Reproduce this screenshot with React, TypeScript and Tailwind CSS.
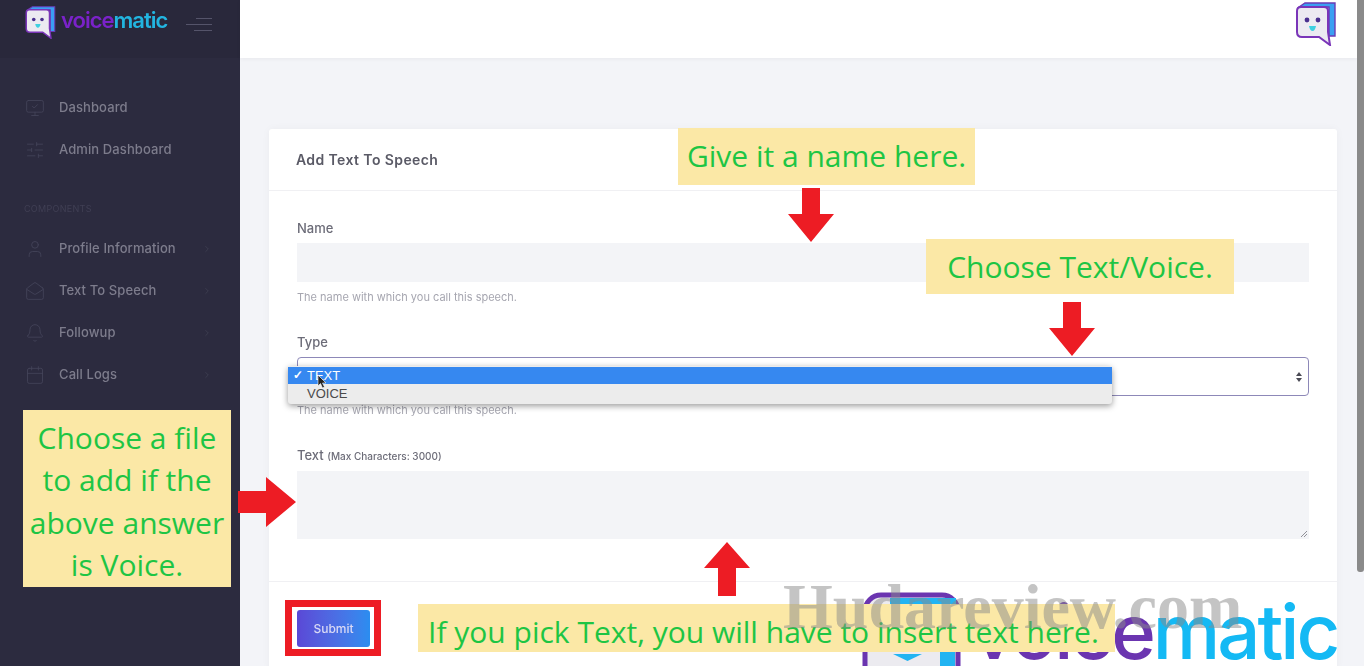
import React from "react";
import { ChevronRight, User, Bell, Calendar, MonitorCheck, SlidersHorizontal, MailOpen } from "lucide-react";

const poppins = "font-['Inter','Open_Sans',sans-serif]";
const note = "font-['Open_Sans','Noto_Sans',sans-serif] text-[#1ec544] bg-[#fbe8a6] text-[30px]";

function Bot({ className }: { className?: string }) {
  return (
    <svg viewBox="0 0 40 44" className={className}>
      <path d="M3 5 L9 1 H39 V34 H33 V5 Z" fill="#3a9ff2" stroke="#6a3bb5" strokeWidth="1.4" />
      <path d="M5 5 H28 Q32 5 32 9 V30 L34 43 L23 35 H6 Q1 35 1 30 V9 Q1 5 5 5 Z" fill="#eceaf1" stroke="#7a35b8" strokeWidth="2" />
      <circle cx="11" cy="18" r="2.4" fill="#4a2f8f" />
      <circle cx="22" cy="18" r="2.4" fill="#4a2f8f" />
      <path d="M13 24 H20 Q19 29 16.5 29 Q14 29 13 24 Z" fill="#3fd0e0" />
    </svg>
  );
}

function NavItem({ icon, label, chevron }: { icon: React.ReactNode; label: string; chevron?: boolean }) {
  return (
    <div className="flex h-[42px] items-center pl-[25px] pr-[28px]">
      <span className="flex w-[34px] text-[#45445a]">{icon}</span>
      <span className={`flex-1 text-[13px] font-medium tracking-[0.1px] text-[#7d7c8c] blur-[0.4px] ${poppins}`}>{label}</span>
      {chevron && <ChevronRight size={10} className="text-[#3f3e52]" />}
    </div>
  );
}

function Arrow({ dir, className }: { dir: "up" | "down" | "right"; className: string }) {
  const pts =
    dir === "down"
      ? "14,0 32,0 32,26 46,26 23,54 0,26 14,26"
      : dir === "up"
        ? "23,0 46,26 32,26 32,54 14,54 14,26 0,26"
        : "0,14 28,14 28,0 58,25 28,50 28,36 0,36";
  const vb = dir === "right" ? "0 0 58 50" : "0 0 46 54";
  return (
    <svg viewBox={vb} className={`absolute ${className}`} preserveAspectRatio="none">
      <polygon points={pts} fill="#ed1c24" />
    </svg>
  );
}

const helper = `text-[11px] leading-[14px] text-[#a6a6b0] blur-[0.4px] ${poppins}`;
const label = `text-[13px] leading-[16px] font-medium text-[#6c6c78] blur-[0.3px] ${poppins}`;

export default function App() {
  return (
    <div className="relative flex h-[666px] w-[1364px] overflow-hidden bg-[#f3f4f8]">
      <aside className="w-[240px] shrink-0 bg-[#2c2b3f]">
        <div className="flex h-[58px] items-start bg-[#29283b] pl-[25px] pt-[6px]">
          <Bot className="h-[33px] w-[31px]" />
          <span className="ml-[5px] text-[22px] leading-[28px] font-semibold tracking-[-1px] blur-[0.4px] font-['Inter',sans-serif]">
            <span className="text-[#7a22c9]">voice</span>
            <span className="text-[#22b5e0]">matic</span>
          </span>
          <div className="ml-[19px] mt-[12px] flex w-[26px] flex-col items-end gap-[5px]">
            <span className="h-px w-[16px] bg-[#55546a]" />
            <span className="h-px w-[26px] bg-[#55546a]" />
            <span className="h-px w-[18px] bg-[#55546a]" />
          </div>
        </div>
        <nav className="pt-[29px]">
          <NavItem icon={<MonitorCheck size={20} strokeWidth={1} />} label="Dashboard" />
          <NavItem icon={<SlidersHorizontal size={20} strokeWidth={1} />} label="Admin Dashboard" />
          <div className={`mb-[12px] mt-[31px] pl-[24px] text-[9px] leading-[14px] tracking-[0.3px] text-[#403f54] blur-[0.3px] ${poppins}`}>COMPONENTS</div>
          <NavItem icon={<User size={20} strokeWidth={1} />} label="Profile Information" chevron />
          <NavItem icon={<MailOpen size={20} strokeWidth={1} />} label="Text To Speech" chevron />
          <NavItem icon={<Bell size={20} strokeWidth={1} />} label="Followup" chevron />
          <NavItem icon={<Calendar size={20} strokeWidth={1} />} label="Call Logs" chevron />
        </nav>
      </aside>

      <main className="flex min-w-0 flex-1 flex-col">
        <header className="mr-[7px] flex h-[58px] shrink-0 items-start justify-end bg-white pr-[21px] pt-[2px] shadow-[0_1px_4px_rgba(0,0,0,0.05)]">
          <Bot className="h-[44px] w-[40px]" />
        </header>
        <div className="flex-1 pl-[29px] pr-[27px] pt-[71px]">
          <section className="rounded-t-[3px] bg-white shadow-[0_0_8px_rgba(0,0,0,0.04)]">
            <div className="flex h-[62px] items-center border-b border-[#f0f0f3] px-[27px]">
              <h2 className={`text-[14px] font-semibold tracking-[0.4px] text-[#5a5a66] blur-[0.3px] ${poppins}`}>Add Text To Speech</h2>
            </div>
            <div className="pl-[28px] pr-[28px] pt-[29px]">
              <div className={label}>Name</div>
              <div className="mt-[7px] h-[39px] bg-[#f3f4f7]" />
              <div className={`mt-[8px] ${helper}`}>The name with which you call this speech.</div>

              <div className={`mt-[30px] ${label}`}>Type</div>
              <div className="mt-[7px] flex h-[39px] items-center justify-end rounded-[4px] border border-[#8d88b8] bg-white pr-[5px]">
                <svg viewBox="0 0 8 12" className="h-[12px] w-[8px]">
                  <path d="M4 1 L7 5 H1 Z M4 11 L1 7 H7 Z" fill="#4b4b55" />
                </svg>
              </div>
              <div className={`mt-[7px] ${helper}`}>The name with which you call this speech.</div>

              <div className={`mt-[30px] ${label}`}>
                Text <span className="text-[10px]">(Max Characters: 3000)</span>
              </div>
              <div className="relative mt-[7px] h-[68px] bg-[#f3f4f7]">
                <svg viewBox="0 0 8 8" className="absolute bottom-px right-px h-[8px] w-[8px]">
                  <path d="M1 7 L7 1 M4 7 L7 4" stroke="#77777f" strokeWidth="0.8" />
                </svg>
              </div>
            </div>
            <div className="mt-[42px] h-[90px] border-t border-[#f0f0f3] pl-[28px] pt-[28px]">
              <button className={`h-[37px] w-[73px] rounded-[3px] bg-gradient-to-r from-[#5a48d6] to-[#2a8df0] text-[12px] font-medium text-[#d9d9f5] blur-[0.3px] ${poppins}`}>
                Submit
              </button>
            </div>
          </section>
        </div>
      </main>

      {/* scrollbar thumb */}
      <div className="absolute right-0 top-0 h-[572px] w-[7px] rounded-b-[3px] bg-[#8a8a8a]" />

      {/* select dropdown */}
      <div className="absolute left-[288px] top-[366px] w-[824px] rounded-[3px] bg-[#ececec] py-px font-['Liberation_Sans',sans-serif] text-[13px] leading-[17px] text-[#4a4a4a] shadow-[0_2px_6px_rgba(0,0,0,0.4)]">
        <div className="flex h-[17px] items-center bg-[#3688f0] text-white">
          <span className="w-[19px] pl-[5px] text-[12px] font-bold">✓</span>
          <span>TEXT</span>
        </div>
        <div className="flex h-[19px] items-center pl-[19px]">VOICE</div>
      </div>
      <svg viewBox="0 0 10 14" className="absolute left-[317px] top-[375px] h-[14px] w-[10px]">
        <path d="M1 0 V11 L3.5 8.5 L5.5 13 L7.5 12 L5.5 8 H9 Z" fill="#222" stroke="#fff" strokeWidth="0.6" />
      </svg>

      {/* big logo */}
      <svg viewBox="0 0 104 76" className="absolute left-[860px] top-[590px] h-[76px] w-[104px]">
        <rect x="5" y="5" width="93" height="100" rx="16" fill="#ecebf0" stroke="#6b35b0" strokeWidth="5" />
        <rect x="30" y="8" width="66" height="6" fill="#22b4f2" />
        <path d="M33 64 H62 L47.5 71 Z" fill="#22b4f2" />
        <path d="M80 40 H95 V76 H80 Z" fill="#22b4f2" />
      </svg>
      <div className="absolute left-[972px] top-[586px] text-[76px] leading-[90px] font-medium tracking-[-3px] font-['Inter',sans-serif]">
        <span className="text-[#6b35b0]">voice</span>
        <span className="text-[#14b9f4]">matic</span>
      </div>

      {/* annotations */}
      <div className={`absolute left-[678px] top-[128px] flex h-[57px] w-[297px] items-center justify-center pb-[2px] ${note}`}>Give it a name here.</div>
      <div className={`absolute left-[926px] top-[239px] flex h-[55px] w-[308px] items-center justify-center ${note}`}>Choose Text/Voice.</div>
      <div className={`absolute left-[23px] top-[410px] flex h-[177px] w-[208px] items-center justify-center pt-[6px] text-center leading-[42.3px] ${note}`}>
        <span>Choose a file<br />to add if the<br />above answer<br />is Voice.</span>
      </div>
      <div className={`absolute left-[418px] top-[604px] flex h-[48px] w-[697px] items-center justify-start whitespace-nowrap pl-[10px] pt-[6px] ${note}`}>If you pick Text, you will have to insert text here.</div>

      <Arrow dir="down" className="left-[788px] top-[188px] h-[54px] w-[46px]" />
      <Arrow dir="down" className="left-[1049px] top-[302px] h-[54px] w-[46px]" />
      <Arrow dir="right" className="left-[238px] top-[477px] h-[50px] w-[58px]" />
      <Arrow dir="up" className="left-[704px] top-[542px] h-[54px] w-[46px]" />

      <div className="pointer-events-none absolute left-[285px] top-[600px] h-[56px] w-[96px] border-[7px] border-[#ed1c24]" />

      {/* watermark */}
      <div className="pointer-events-none absolute left-[783px] top-[572px] text-[64px] leading-[70px] font-bold whitespace-nowrap text-[#8a8a8a]/50 font-['Liberation_Serif',serif]">
        Hudareview.com
      </div>
    </div>
  );
}
